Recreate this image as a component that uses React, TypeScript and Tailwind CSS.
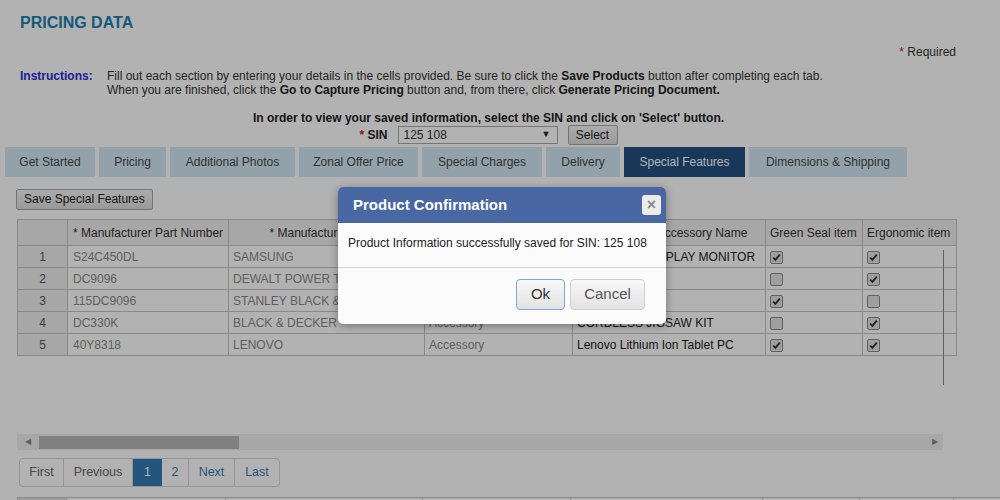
const tabs = [
  { label: "Get Started", w: "w-[90px]" },
  { label: "Pricing", w: "w-[67px]" },
  { label: "Additional Photos", w: "w-[125px]" },
  { label: "Zonal Offer Price", w: "w-[119px]" },
  { label: "Special Charges", w: "w-[120px]" },
  { label: "Delivery", w: "w-[74px]" },
  { label: "Special Features", w: "w-[121px]", active: true },
  { label: "Dimensions & Shipping", w: "w-[158px]" },
];

const rows = [
  { part: "S24C450DL", maker: "SAMSUNG", type: "Product", name: "23.6 IN LED DISPLAY MONITOR", green: true, ergo: true },
  { part: "DC9096", maker: "DEWALT POWER TOOLS", type: "Accessory", name: "XRP BATTERY", green: false, ergo: true },
  { part: "115DC9096", maker: "STANLEY BLACK & DECKER", type: "Accessory", name: "BATTERY PACK", green: true, ergo: false },
  { part: "DC330K", maker: "BLACK & DECKER", type: "Accessory", name: "CORDLESS JIGSAW KIT", green: false, ergo: true },
  { part: "40Y8318", maker: "LENOVO", type: "Accessory", name: "Lenovo Lithium Ion Tablet PC", green: true, ergo: true },
];

function Check({ on }: { on: boolean }) {
  return (
    <span className="inline-flex w-[13px] h-[13px] items-center justify-center rounded-[2px] border border-[#8a8a8a] bg-[#e4e4e4] align-middle">
      {on && (
        <svg width="9" height="9" viewBox="0 0 9 9">
          <path d="M1.2 4.6 L3.4 6.9 L7.8 1.6" fill="none" stroke="#303030" strokeWidth="1.8" />
        </svg>
      )}
    </span>
  );
}

const App = () => {
  return (
    <div className="relative w-[1000px] h-[500px] overflow-hidden bg-white text-[#333] font-['Liberation_Sans',Arial,sans-serif]">
      {/* page */}
      <div className="pt-[12px]">
        <h1 className="px-[20px] text-[16px] leading-[22px] font-bold text-[#1d80b2]">PRICING DATA</h1>
        <div className="mt-[11px] pr-[44px] text-right text-[12px] leading-[14px] text-[#333]">
          <span className="text-[#d42020]">*</span> Required
        </div>
        <div className="mt-[10px] flex px-[20px] text-[12px] leading-[14px]">
          <div className="w-[87px] font-bold text-[#2b2bd8]">Instructions:</div>
          <div className="text-[#333]">
            <div>
              Fill out each section by entering your details in the cells provided. Be sure to click the{" "}
              <b className="text-[#222]">Save Products</b> button after completing each tab.
            </div>
            <div>
              When you are finished, click the <b className="text-[#222]">Go to Capture Pricing</b> button and, from there, click{" "}
              <b className="text-[#222]">Generate Pricing Document.</b>
            </div>
          </div>
        </div>

        <div className="mt-[14px] w-[977px] flex flex-col items-center text-[12px]">
          <div className="font-bold leading-[14px] text-[#222]">
            In order to view your saved information, select the SIN and click on 'Select' button.
          </div>
          <div className="flex items-center h-[20px]">
            <span className="font-bold text-[#222]">
              <span className="text-[#d42020]">*</span> SIN
            </span>
            <div className="ml-[10px] w-[160px] h-[18px] border border-[#a9a9a9] bg-white flex items-center justify-between pl-[5px] pr-[6px] text-[12px] text-[#333]">
              <span>125 108</span>
              <span className="text-[9px] text-[#222]">▼</span>
            </div>
            <button className="ml-[10px] w-[50px] h-[20px] border border-[#a6a6a6] rounded-[2px] bg-gradient-to-b from-[#f6f6f6] to-[#dcdcdc] text-[12px] text-[#222]">
              Select
            </button>
          </div>
        </div>

        {/* tabs */}
        <div className="mt-[2px] flex gap-[4px] pl-[5px]">
          {tabs.map((t) => (
            <div
              key={t.label}
              className={`${t.w} h-[30px] flex items-center justify-center text-[12px] ${
                t.active ? "bg-[#254f80] text-white" : "bg-[#d3e9f4] text-[#474747]"
              }`}
            >
              {t.label}
            </div>
          ))}
        </div>

        <div className="mt-[9px] pl-[16px]">
          <button className="h-[21px] px-[7px] border border-[#a6a6a6] rounded-[2px] bg-gradient-to-b from-[#f6f6f6] to-[#dcdcdc] text-[12px] text-[#222]">
            Save Special Features
          </button>
        </div>

        {/* grid */}
        <div className="relative mt-[9px] ml-[17px] w-[939px] h-[215px]">
          <table className="table-fixed border-collapse text-[12px] w-[939px]">
            <colgroup>
              <col className="w-[50px]" />
              <col className="w-[161px]" />
              <col className="w-[196px]" />
              <col className="w-[148px]" />
              <col className="w-[193px]" />
              <col className="w-[97px]" />
              <col className="w-[94px]" />
            </colgroup>
            <thead>
              <tr className="h-[26px] bg-[#efefef] text-[#333]">
                <th className="border border-[#c4c4c4] font-normal"></th>
                <th className="border border-[#c4c4c4] font-normal text-left pl-[5px] whitespace-nowrap">* Manufacturer Part Number</th>
                <th className="border border-[#c4c4c4] font-normal whitespace-nowrap">* Manufacturer Name</th>
                <th className="border border-[#c4c4c4] font-normal whitespace-nowrap">* Item Type</th>
                <th className="border border-[#c4c4c4] font-normal whitespace-nowrap">* Product or Accessory Name</th>
                <th className="border border-[#c4c4c4] font-normal text-left pl-[4px] whitespace-nowrap">Green Seal item</th>
                <th className="border border-[#c4c4c4] font-normal text-left pl-[4px] whitespace-nowrap">Ergonomic item</th>
              </tr>
            </thead>
            <tbody>
              {rows.map((r, i) => (
                <tr key={r.part} className="h-[22px]">
                  <td className="border border-[#c4c4c4] bg-[#efefef] text-center text-[#555]">{i + 1}</td>
                  <td className="border border-[#c4c4c4] pl-[5px] text-[#888]">{r.part}</td>
                  <td className="border border-[#c4c4c4] pl-[4px] text-[#888] whitespace-nowrap overflow-hidden">{r.maker}</td>
                  <td className="border border-[#c4c4c4] pl-[4px] text-[#888]">{r.type}</td>
                  <td className="border border-[#c4c4c4] pl-[4px] text-[#222] whitespace-nowrap overflow-hidden">{r.name}</td>
                  <td className="border border-[#c4c4c4] pl-[4px]"><Check on={r.green} /></td>
                  <td className="border border-[#c4c4c4] pl-[4px]"><Check on={r.ergo} /></td>
                </tr>
              ))}
            </tbody>
          </table>
          <div className="absolute left-[926px] top-[31px] w-px h-[135px] bg-[#8a8a8a]" />
        </div>

        {/* horizontal scrollbar */}
        <div className="ml-[17px] w-[926px] h-[16px] bg-[#f0f0f0] flex items-center">
          <span className="w-[22px] flex justify-center text-[8px] text-[#8a8a8a]">◀</span>
          <div className="w-[200px] h-[13px] bg-[#b8b8b8]" />
          <div className="flex-1" />
          <span className="w-[16px] flex justify-center text-[8px] text-[#8a8a8a]">▶</span>
        </div>

        {/* pagination */}
        <div className="mt-[8px] ml-[19px] flex w-fit h-[29px] border border-[#d6d6d6] rounded-[4px] overflow-hidden text-[12.5px]">
          <div className="w-[44px] flex items-center justify-center text-[#666] border-r border-[#d6d6d6]">First</div>
          <div className="w-[69px] flex items-center justify-center text-[#666] border-r border-[#d6d6d6]">Previous</div>
          <div className="w-[29px] flex items-center justify-center bg-[#337ab7] text-white">1</div>
          <div className="w-[27px] flex items-center justify-center text-[#337ab7] border-r border-[#d6d6d6]">2</div>
          <div className="w-[46px] flex items-center justify-center text-[#337ab7] border-r border-[#d6d6d6]">Next</div>
          <div className="w-[44px] flex items-center justify-center text-[#337ab7]">Last</div>
        </div>

        {/* next grid header peeking */}
        <div className="mt-[10px] ml-[17px] flex h-[20px] border-t border-[#c4c4c4]">
          <div className="w-[50px] bg-[#e0e0e0] border-x border-[#c4c4c4]" />
          <div className="w-[159px] border-r border-[#c4c4c4]" />
          <div className="w-[197px] border-r border-[#c4c4c4]" />
          <div className="w-[148px] border-r border-[#c4c4c4]" />
          <div className="w-[192px] border-r border-[#c4c4c4]" />
          <div className="w-[97px] border-r border-[#c4c4c4]" />
          <div className="w-[94px] border-r border-[#c4c4c4]" />
        </div>
      </div>

      {/* modal backdrop */}
      <div className="absolute inset-0 bg-[rgba(0,0,0,0.3)]" />

      {/* dialog */}
      <div className="absolute left-[338px] top-[187px] w-[328px] h-[137px] bg-[#fbfbfb] rounded-[5px] shadow-[0_2px_8px_rgba(0,0,0,0.35)] overflow-hidden flex flex-col">
        <div className="h-[36px] bg-[#4867a3] flex items-center justify-between pl-[15px] pr-[5px]">
          <span className="text-white font-bold text-[15px]">Product Confirmation</span>
          <span className="w-[19px] h-[20px] rounded-[3px] bg-[#ececec] flex items-center justify-center text-[16px] leading-none font-bold text-[#8a8a8a]">×</span>
        </div>
        <div className="h-[45px] pl-[10px] pt-[11px] text-[12px] text-[#222] border-b border-[#cfcfcf]">
          Product Information successfully saved for SIN: 125 108
        </div>
        <div className="flex justify-end gap-[5px] pr-[21px] pt-[11px]">
          <button className="w-[49px] h-[31px] rounded-[4px] border border-[#7aa7dd] bg-gradient-to-b from-[#f8f8f8] to-[#e2e2e2] text-[15px] text-[#333]">
            Ok
          </button>
          <button className="w-[75px] h-[31px] rounded-[4px] border border-[#cfcfcf] bg-gradient-to-b from-[#f8f8f8] to-[#e2e2e2] text-[15px] text-[#555]">
            Cancel
          </button>
        </div>
      </div>
    </div>
  );
};

export default App;
